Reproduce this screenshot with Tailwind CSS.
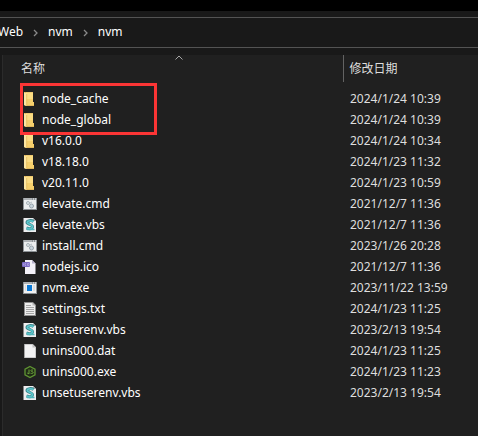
<!DOCTYPE html>
<html lang="zh-CN">
<head>
<meta charset="utf-8">
<meta name="viewport" content="width=device-width, initial-scale=1">
<title>nvm</title>
<script src="https://cdn.jsdelivr.net/npm/@tailwindcss/browser@4"></script>
</head>
<body class="flex min-h-screen flex-col overflow-x-hidden bg-[#191919] font-['Noto_Sans','Noto_Sans_CJK_SC',sans-serif] text-xs text-white">
<svg class="hidden" aria-hidden="true">
  <symbol id="folder" viewBox="0 0 16 16">
    <path d="M2 1h9v11h1v3H4l-2-1z" fill="#e3b95c"/>
    <path d="M4 1.500h7V11h1v3H4z" fill="#fbdc83"/>
    <path d="M4 8h7v3h1v3H4z" fill="#f5cf6c"/>
    <path d="M2 1.500l2.500 1V15L2 14z" fill="#fde6a2"/>
    <path d="M4.700 3v11.500" stroke="#dcb052" stroke-width=".6"/>
  </symbol>
  <symbol id="cmd" viewBox="0 0 16 16">
    <path d="M1 2h14v12H1z" fill="#8d9296"/>
    <path d="M2 4h12v9H2z" fill="#eceeef"/>
    <path d="M2 2.500h8v1H2z" fill="#d0d4d6"/><path d="M11 2.500h1v1h-1zM13 2.500h1v1h-1z" fill="#fff"/>
    <circle cx="6" cy="7" r="1.500" fill="#e3e9ed" stroke="#a6afb5"/>
    <circle cx="9.500" cy="10" r="2" fill="#c9d5dd" stroke="#98a4ac"/>
    <path d="M8 7l2-1" stroke="#b4bec4"/>
  </symbol>
  <symbol id="vbs" viewBox="0 0 16 16">
    <path d="M1.500 1h9.500l3 3v11H1.500z" fill="#eeeef0"/>
    <path d="M11 1v3h3z" fill="#a9adb0"/>
    <path d="M11.500 4.500C9.500 3 5 3.500 5 5.500s6 2 5.500 4.500-4.500 1.500-6 1" fill="none" stroke="#3b858b" stroke-width="3"/>
    <path d="M11.500 4.500C9 3.200 5.300 3.800 5.300 5.500s5.700 2 5.200 4.500-4.500 1.500-6 1" fill="none" stroke="#5cc6cc" stroke-width="1.800"/>
    <path d="M5 12.500h7.500" stroke="#4fb3ba" stroke-width="1.500"/>
  </symbol>
  <symbol id="ico" viewBox="0 0 16 16">
    <path d="M3 1h7l3.500 3.500V15H3z" fill="#f3f1f8"/>
    <path d="M10 1v3.500h3.500z" fill="#b8b1cb"/>
    <rect x="0" y="3" width="8" height="5" rx="1" fill="#7d6bc4"/>
    <path d="M1.500 4.500v2M4 4.500H3v2h1M5.500 4.500H7v2H5.500z" fill="none" stroke="#b9adeb" stroke-width=".7"/>
  </symbol>
  <symbol id="exe" viewBox="0 0 16 16">
    <path d="M1 2h14v12H1z" fill="#8f9497"/>
    <path d="M2 4h12v9H2z" fill="#f0f0f0"/>
    <path d="M2 2.500h8v1H2z" fill="#cfd2d4"/><path d="M11 2.500h1v1h-1zM13 2.500h1v1h-1z" fill="#fff"/>
    <path d="M5 5h5v6H5z" fill="#0a78d4"/>
    <path d="M3 6h1M3 8h1M3 10h1M11 6h2M11 8h2M11 10h2" stroke="#c9cbcd"/>
  </symbol>
  <symbol id="txt" viewBox="0 0 16 16">
    <path d="M2 1h9l3 3v11H2z" fill="#8e8e8e"/>
    <path d="M3 2h7.500L13 4.500V14H3z" fill="#ededed"/>
    <path d="M10.500 1.500v3h3z" fill="#b9b9b9"/>
    <path d="M4 4.500h5M4 6.500h8M4 8.500h8M4 10.500h8M4 12.500h8" stroke="#a5a5a5"/>
  </symbol>
  <symbol id="dat" viewBox="0 0 16 16">
    <path d="M2 1h9l3 3v11H2z" fill="#a5a5a5"/>
    <path d="M3 1.500h7.500L13.500 4.500V14.500H3z" fill="#f2f2f3"/>
    <path d="M10.500 1.500v3h3z" fill="#bdbdbd"/>
  </symbol>
  <symbol id="node" viewBox="0 0 16 16">
    <path d="M8 2.500l5 2.700v5.600l-5 2.700-5-2.700V5.200z" fill="#202b16" stroke="#5f9433" stroke-width="1.300"/>
    <path d="M7 5.500v4.300l-1.800-.8M11 6.200c-2.600-.8-2.800 1-.8 1.500s1 2.500-1.700 1.500" fill="none" stroke="#6ba03d"/>
  </symbol>
  <symbol id="sep" viewBox="0 0 5 8"><path d="M1 1l3 3-3 3" fill="none" stroke="#8a8a8a" stroke-width="1.300"/></symbol>
</svg>

<header>
  <div class="h-[11px] bg-black"></div>
  <nav aria-label="路径" class="mt-1.5 flex h-[31px] items-center gap-2.5 border-y border-[#535353] pb-0.5">
    <a href="#web" class="-ml-0.5">Web</a>
    <svg class="mt-0.5 h-2 w-[5px]"><use href="#sep"/></svg>
    <a href="#nvm">nvm</a>
    <svg class="mt-0.5 h-2 w-[5px]"><use href="#sep"/></svg>
    <a href="#nvm-nvm">nvm</a>
  </nav>
</header>

<main class="relative mt-[7px] ml-0.5 grow border-l border-[#2b2b2b] bg-[#202020]">
  <table class="w-full table-fixed border-collapse text-left">
    <colgroup><col><col class="w-[135px]"></colgroup>
    <thead class="text-[#dedede]">
      <tr class="h-[27px]">
        <th class="relative p-0 pl-[18px] font-normal">
          <button type="button">名称</button>
          <svg class="absolute top-0 left-1/2 ml-0.5 h-[5px] w-2" viewBox="0 0 8 5"><path d="M.5 4.500L4 1l3.500 3.500" fill="none" stroke="#a8a8a8"/></svg>
        </th>
        <th class="border-l border-[#636363] p-0 pl-1.5 font-normal"><button type="button">修改日期</button></th>
      </tr>
    </thead>
    <tbody id="files" class="before:block before:h-1.5"></tbody>
  </table>
  <div class="pointer-events-none absolute top-7 left-[17px] h-[52px] w-[137px] border-3 border-[#fb3535]"></div>
</main>

<template id="row">
  <tr class="h-[21px]">
    <td class="p-0 pl-[19px]"><div class="flex items-center gap-1"><svg class="size-4 shrink-0"><use/></svg><span></span></div></td>
    <td class="p-0 pl-[7px] whitespace-nowrap text-[#dedede]"></td>
  </tr>
</template>
<script>
const files = [
  ['folder', 'node_cache', '2024/1/24 10:39'],
  ['folder', 'node_global', '2024/1/24 10:39'],
  ['folder', 'v16.0.0', '2024/1/24 10:34'],
  ['folder', 'v18.18.0', '2024/1/23 11:32'],
  ['folder', 'v20.11.0', '2024/1/23 10:59'],
  ['cmd', 'elevate.cmd', '2021/12/7 11:36'],
  ['vbs', 'elevate.vbs', '2021/12/7 11:36'],
  ['cmd', 'install.cmd', '2023/1/26 20:28'],
  ['ico', 'nodejs.ico', '2021/12/7 11:36'],
  ['exe', 'nvm.exe', '2023/11/22 13:59'],
  ['txt', 'settings.txt', '2024/1/23 11:25'],
  ['vbs', 'setuserenv.vbs', '2023/2/13 19:54'],
  ['dat', 'unins000.dat', '2024/1/23 11:25'],
  ['node', 'unins000.exe', '2024/1/23 11:23'],
  ['vbs', 'unsetuserenv.vbs', '2023/2/13 19:54']
];
const body = document.getElementById('files');
for (const [icon, name, date] of files) {
  const row = document.getElementById('row').content.cloneNode(true);
  row.querySelector('use').setAttribute('href', '#' + icon);
  row.querySelector('span').textContent = name;
  row.querySelectorAll('td')[1].textContent = date;
  body.append(row);
}
</script>
</body>
</html>
